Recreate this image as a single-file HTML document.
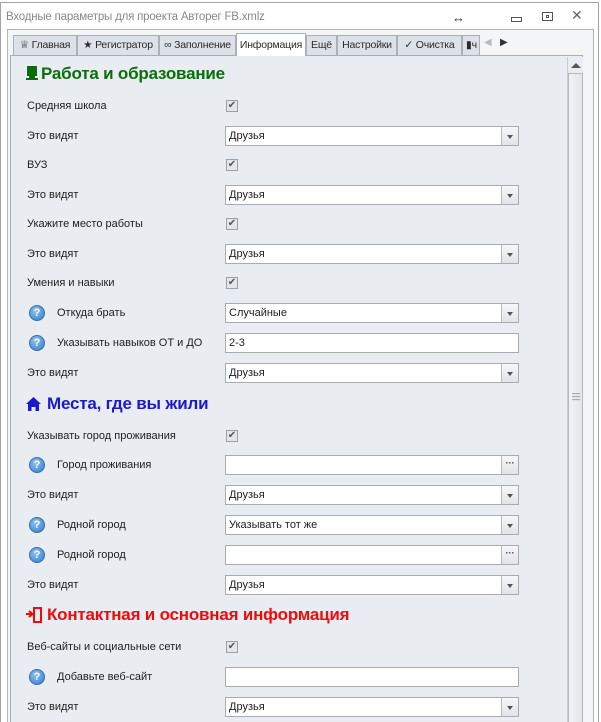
<!DOCTYPE html>
<html><head><meta charset="utf-8"><style>
*{box-sizing:border-box;margin:0;padding:0}
html,body{width:601px;height:722px;overflow:hidden}
body{background:#fff;font-family:"Liberation Sans",sans-serif;font-size:11px;color:#1e1e1e;position:relative}
.a{position:absolute}
.title{left:6px;top:11px;color:#888;font-size:11.5px;letter-spacing:-0.2px}
.tab{position:absolute;top:35px;height:20px;background:#dde1e8;border:1px solid #aab0b8;border-bottom:none;line-height:19px;text-align:center;color:#2a2a2a;font-size:10.5px;letter-spacing:-0.2px;white-space:nowrap;overflow:hidden}
.tab.act{background:#fff;top:33px;height:23px;line-height:22px}
.panel{left:10px;top:55px;width:573px;height:667px;background:#e9ecf1;border:1px solid #a9aeb6;border-bottom:none}
.lbl{position:absolute;left:27px;transform:translateY(-50%)}
.lbl2{position:absolute;left:57px;transform:translateY(-50%)}
.cb{position:absolute;left:226px;width:12px;height:12px;border:1px solid #9aa0a8;background:#e4e6ea;transform:translateY(-50%);font-size:10px;line-height:10px;text-align:center;color:#555}
.inp{position:absolute;left:225px;width:294px;height:20px;background:#fff;border:1px solid #a8acb2;transform:translateY(-50%);padding-left:3px;line-height:18px}
.btn{position:absolute;right:0;top:0;width:17px;height:18px;border-left:1px solid #b6bac0;background:linear-gradient(#f6f7f9,#e1e4e8)}
.dd::after{content:"";position:absolute;left:5px;top:8px;border-left:3.5px solid transparent;border-right:3.5px solid transparent;border-top:4px solid #555}
.dots{font-size:9px;text-align:center;line-height:14px;color:#333;font-weight:bold}
.q{position:absolute;left:29px;width:16px;height:16px;border-radius:50%;background:radial-gradient(circle at 40% 35%,#8ec3f0,#2f7bc8);border:1px solid #3a6ea8;transform:translateY(-50%);color:#fff;font-weight:bold;font-size:11px;text-align:center;line-height:14px}
.h{position:absolute;font-weight:bold;font-size:17px;transform:translateY(-50%);letter-spacing:-0.2px}
.ic{position:absolute;left:26px}
</style></head><body>
<div class="a" style="left:0;top:2px;width:599px;height:720px;border:1px solid #a0a4aa;border-bottom:none"></div>
<div class="a title">Входные параметры для проекта Авторег FB.xmlz</div>
<div class="a" style="left:452px;top:10px;font-size:13px;color:#333">↔</div>
<div class="a" style="left:511px;top:17px;width:11px;height:5px;border:1px solid #555"></div>
<div class="a" style="left:542px;top:12px;width:11px;height:9px;border:1px solid #555"><div style="margin:2px 3px;width:3px;height:3px;border:1px solid #555"></div></div>
<div class="a" style="left:571px;top:7px;font-size:14px;color:#666">✕</div>
<div class="a" style="left:7px;top:29px;width:587px;height:700px;border:1px solid #b0b4ba;background:#f4f5f7"></div>
<div class="tab" style="left:13px;width:64px">♕ Главная</div>
<div class="tab" style="left:77px;width:82px">★ Регистратор</div>
<div class="tab" style="left:159px;width:77px">∞ Заполнение</div>
<div class="tab" style="left:306px;width:31px">Ещё</div>
<div class="tab" style="left:337px;width:60px">Настройки</div>
<div class="tab" style="left:397px;width:65px">✓ Очистка</div>
<div class="tab" style="left:462px;width:18px;text-align:left;padding-left:3px">▮ч</div>
<div class="a" style="left:484px;top:37px;color:#bbb;font-size:10px">◀</div>
<div class="a" style="left:500px;top:37px;color:#333;font-size:10px">▶</div>
<div class="a panel"></div>
<div class="tab act" style="left:236px;width:70px">Информация</div>
<div class="a" style="left:567px;top:57px;width:16px;height:665px;background:#e9ecf1;border-left:1px solid #c9ccd1"></div>
<div class="a" style="left:571px;top:63px;border-left:5px solid transparent;border-right:5px solid transparent;border-bottom:5px solid #555"></div>
<div class="a" style="left:568px;top:73px;width:15px;height:650px;background:linear-gradient(90deg,#f2f3f5,#e3e5e9);border:1px solid #b4b8be"></div>
<div class="a" style="left:572px;top:392px;color:#666;font-size:8px;line-height:3px">—<br>—<br>—</div>

<svg class="ic" style="top:66px" width="12" height="15"><rect x="1" y="0" width="10" height="10" fill="#0a6e0a"/><rect x="3" y="10" width="6" height="2" fill="#0a6e0a"/><rect x="0" y="12" width="12" height="2" fill="#0a6e0a"/></svg>
<div class="h" style="left:41px;top:74px;color:#0a6e0a">Работа и образование</div>
<div class="lbl" style="top:106px">Средняя школа</div><div class="cb" style="top:106px">✔</div>
<div class="lbl" style="top:136px">Это видят</div><div class="inp" style="top:136px">Друзья<div class="btn dd"></div></div>
<div class="lbl" style="top:165px">ВУЗ</div><div class="cb" style="top:165px">✔</div>
<div class="lbl" style="top:195px">Это видят</div><div class="inp" style="top:195px">Друзья<div class="btn dd"></div></div>
<div class="lbl" style="top:224px">Укажите место работы</div><div class="cb" style="top:224px">✔</div>
<div class="lbl" style="top:254px">Это видят</div><div class="inp" style="top:254px">Друзья<div class="btn dd"></div></div>
<div class="lbl" style="top:283px">Умения и навыки</div><div class="cb" style="top:283px">✔</div>
<div class="q" style="top:313px">?</div><div class="lbl2" style="top:313px">Откуда брать</div><div class="inp" style="top:313px">Случайные<div class="btn dd"></div></div>
<div class="q" style="top:343px">?</div><div class="lbl2" style="top:343px">Указывать навыков ОТ и ДО</div><div class="inp" style="top:343px">2-3</div>
<div class="lbl" style="top:373px">Это видят</div><div class="inp" style="top:373px">Друзья<div class="btn dd"></div></div>

<svg class="ic" style="top:397px" width="15" height="14"><path d="M7.5 0 L15 7 L13 7 L13 14 L9.5 14 L9.5 10 L5.5 10 L5.5 14 L2 14 L2 7 L0 7 Z" fill="#1a1ac8"/></svg>
<div class="h" style="left:47px;top:404px;color:#1a1ac8">Места, где вы жили</div>
<div class="lbl" style="top:436px">Указывать город проживания</div><div class="cb" style="top:436px">✔</div>
<div class="q" style="top:465px">?</div><div class="lbl2" style="top:465px">Город проживания</div><div class="inp" style="top:465px"><div class="btn dots">···</div></div>
<div class="lbl" style="top:495px">Это видят</div><div class="inp" style="top:495px">Друзья<div class="btn dd"></div></div>
<div class="q" style="top:525px">?</div><div class="lbl2" style="top:525px">Родной город</div><div class="inp" style="top:525px">Указывать тот же<div class="btn dd"></div></div>
<div class="q" style="top:555px">?</div><div class="lbl2" style="top:555px">Родной город</div><div class="inp" style="top:555px"><div class="btn dots">···</div></div>
<div class="lbl" style="top:585px">Это видят</div><div class="inp" style="top:585px">Друзья<div class="btn dd"></div></div>

<svg class="ic" style="top:607px" width="16" height="16"><path d="M0 7 H6 M3 4 L6.5 7 L3 10" stroke="#f00a0a" stroke-width="2" fill="none"/><rect x="8" y="1" width="7" height="14" fill="none" stroke="#f00a0a" stroke-width="2"/></svg>
<div class="h" style="left:47px;top:615px;color:#f00a0a">Контактная и основная информация</div>
<div class="lbl" style="top:647px">Веб-сайты и социальные сети</div><div class="cb" style="top:647px">✔</div>
<div class="q" style="top:677px">?</div><div class="lbl2" style="top:677px">Добавьте веб-сайт</div><div class="inp" style="top:677px"></div>
<div class="lbl" style="top:707px">Это видят</div><div class="inp" style="top:707px">Друзья<div class="btn dd"></div></div>
</body></html>
